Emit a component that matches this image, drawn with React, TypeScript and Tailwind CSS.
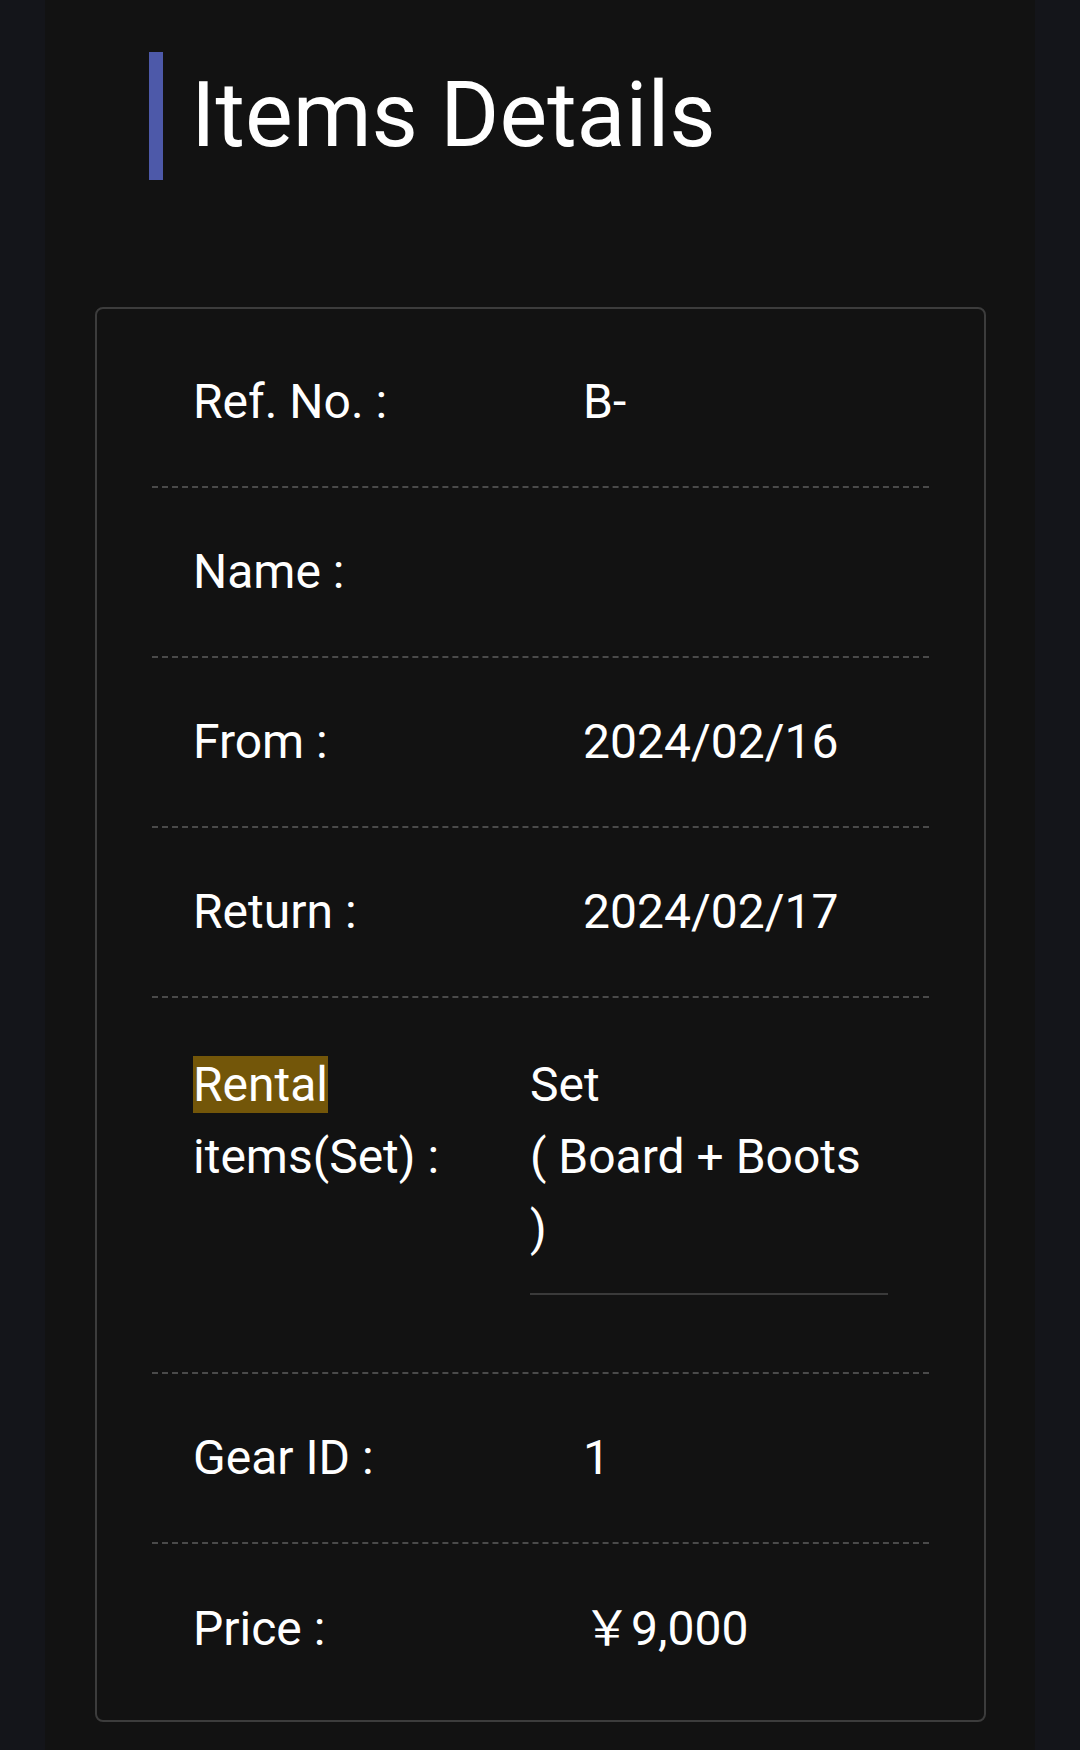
const rows = [
	{ label: "Ref. No. :", value: "B-" },
	{ label: "Name :", value: "" },
	{ label: "From :", value: "2024/02/16" },
	{ label: "Return :", value: "2024/02/17" },
];

function Row({ label, value, last }: { label: string; value: string; last?: boolean }) {
	return (
		<div
			className={`flex items-center h-[170px] pl-[41px] ${last ? "" : "border-b-2 border-dashed border-[#4a4a4a]"}`}
		>
			<div className="w-[390px] shrink-0">{label}</div>
			<div>{value}</div>
		</div>
	);
}

export default function App() {
	return (
		<div className="min-h-screen bg-[#14151a] font-['Roboto','Noto_Sans_CJK_JP',sans-serif] text-white">
			<div className="mx-[45px] min-h-[1750px] bg-[#121212] pt-[52px]">
				<div className="ml-[104px] flex h-[128px] items-center border-l-[14px] border-[#4d59a9] pl-[28px]">
					<h1 className="text-[90px] leading-[128px] font-normal">Items Details</h1>
				</div>

				<div className="ml-[50px] mt-[127px] w-[891px] rounded-[8px] border-2 border-[#3c3c3c] px-[55px] pt-[9px] pb-[6px] text-[48px] leading-[72px]">
					{rows.map((r) => (
						<Row key={r.label} label={r.label} value={r.value} />
					))}

					<div className="flex items-start border-b-2 border-dashed border-[#4a4a4a] pt-[51px] pb-[77px] pl-[41px]">
						<div className="w-[337px] shrink-0">
							<span className="bg-[#735609]">Rental</span> items(Set) :
						</div>
						<div className="w-[358px] border-b-2 border-[#3a3a3a] pb-[28px]">Set<br />( Board + Boots )</div>
					</div>

					<Row label="Gear ID :" value="1" />
					<Row label="Price :" value="￥9,000" last />
				</div>
			</div>
		</div>
	);
}
